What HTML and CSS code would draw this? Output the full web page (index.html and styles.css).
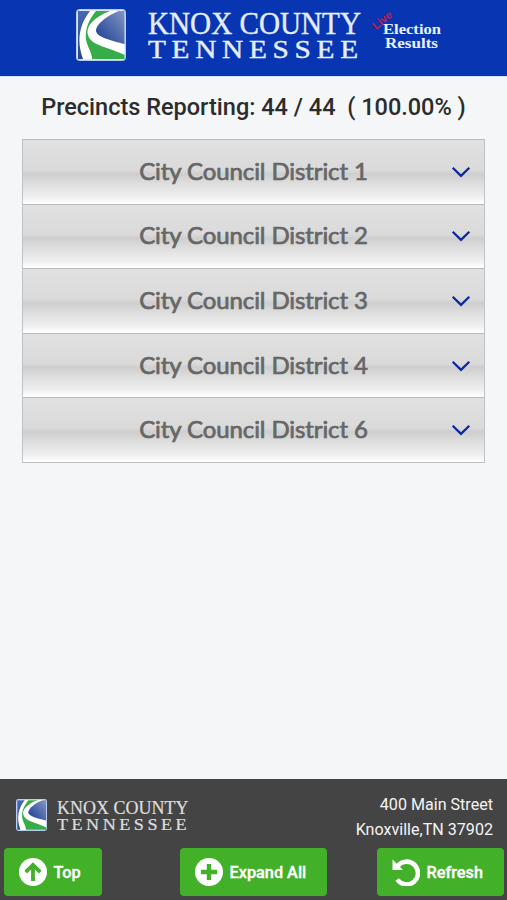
FILE: index.html
```html
<!DOCTYPE html>
<html lang="en">
<head>
<meta charset="utf-8">
<title>Knox County Election Results</title>
<link rel="stylesheet" href="styles.css">
</head>
<body>
<svg class="defs" width="0" height="0" aria-hidden="true">
  <defs>
    <linearGradient id="hill" x1="0" y1="1" x2="1" y2="0"><stop offset="0" stop-color="#183b94"/><stop offset="1" stop-color="#8495c2"/></linearGradient>
    <linearGradient id="edge" x1="0" y1="0" x2="0" y2="1"><stop offset="0" stop-color="#4867b4"/><stop offset="1" stop-color="#27458f"/></linearGradient>
    <symbol id="mark" viewBox="0 0 50 52" preserveAspectRatio="none">
      <rect width="50" height="52" rx="4" fill="#b9cdf0"/>
      <rect x="1.5" y="1.5" width="47" height="49" rx="2.5" fill="#fff"/>
      <path d="M2 2H14C4 15 0 30 7 50H2Z" fill="url(#edge)"/>
      <path d="M20 2H38C23 8 15 16 15 24C16 34 32 35 48.5 45V50H16C16 41 8 35 10 23C11 15 15 8 20 2Z" fill="#36ad49"/>
      <path d="M34 2H44C28 9 20 17 21 24C23 32 39 34 48.500 36V46C33 38 15 37 12 26C9 16 21 7 34 2Z" fill="#fff"/>
      <path d="M43 2H48.500V35C36 32 20 28 20 21.500C20 15 32 6 43 2Z" fill="url(#hill)"/>
    </symbol>
    <symbol id="words" viewBox="0 0 214 50">
      <text x="0" y="22.500" font-size="31.500" textLength="213" lengthAdjust="spacingAndGlyphs">KNOX COUNTY</text>
      <text transform="scale(1.13 1)" x="0" y="47" font-size="26" textLength="186">TENNESSEE</text>
    </symbol>
    <symbol id="chevron" viewBox="0 0 20 12"><path d="M1.700 1.700L10 9.800L18.300 1.700" fill="none" stroke="#0b2a9b" stroke-width="2.300"/></symbol>
  </defs>
</svg>
<header class="header">
  <svg class="mark"><use href="#mark"/></svg>
  <svg class="words"><use href="#words"/></svg>
  <svg class="election" viewBox="0 0 72 54">
    <text class="live" transform="translate(4 21) rotate(-39)">Live</text>
    <text x="11" y="24.500" textLength="58" lengthAdjust="spacingAndGlyphs">Election</text>
    <text x="13" y="39" textLength="53" lengthAdjust="spacingAndGlyphs">Results</text>
  </svg>
</header>
<main class="main">
  <h1 class="status">Precincts Reporting: 44 / 44&nbsp; ( 100.00% )</h1>
  <div class="contests">
    <div class="contest"><span>City Council District 1</span><svg class="chevron"><use href="#chevron"/></svg></div>
    <div class="contest"><span>City Council District 2</span><svg class="chevron"><use href="#chevron"/></svg></div>
    <div class="contest"><span>City Council District 3</span><svg class="chevron"><use href="#chevron"/></svg></div>
    <div class="contest"><span>City Council District 4</span><svg class="chevron"><use href="#chevron"/></svg></div>
    <div class="contest"><span>City Council District 6</span><svg class="chevron"><use href="#chevron"/></svg></div>
  </div>
</main>
<footer class="footer">
  <div class="info">
    <div class="brand"><svg class="mark"><use href="#mark"/></svg><svg class="words"><use href="#words"/></svg></div>
    <address class="address">400 Main Street<br>Knoxville,TN 37902</address>
  </div>
  <nav class="actions">
    <button class="button top"><svg class="icon" viewBox="0 0 28 28"><circle cx="14" cy="14" r="14" fill="#fff"/><path d="M14 23V8M6.700 14.200L14 6.900L21.300 14.200" fill="none" stroke="#43b02a" stroke-width="3.800"/></svg><span>Top</span></button>
    <button class="button expand"><svg class="icon" viewBox="0 0 28 28"><circle cx="14" cy="14" r="14" fill="#fff"/><path d="M14 6V22M6 14H22" stroke="#43b02a" stroke-width="4.400"/></svg><span>Expand All</span></button>
    <button class="button refresh"><svg class="icon" viewBox="0 0 28 28"><path d="M5.500 8.200A11.400 11.400 0 1 1 5.200 21.500" fill="none" stroke="#fff" stroke-width="4.600"/><path d="M.5 1.500V12H11Z" fill="#fff"/></svg><span>Refresh</span></button>
  </nav>
</footer>
</body>
</html>
```

FILE: styles.css
```css
* { box-sizing: border-box; }
body {
  margin: 0;
  height: 900px;
  display: flex;
  flex-direction: column;
  overflow: hidden;
  background: #f4f6f8;
  font-family: Roboto, "Liberation Sans", sans-serif;
}
.defs { position: absolute; }
svg { display: block; flex: none; }
.header {
  height: 77px;
  padding: 9px 0 0 76px;
  display: flex;
  align-items: flex-start;
  background: #0836b3;
  border-bottom: 1px solid #d5def3;
}
.header .mark { width: 50px; height: 52px; }
.words {
  font-family: "Liberation Serif", serif;
  fill: #e4eeff;
  stroke: #e4eeff;
  stroke-width: 0.4px;
}
.header .words { width: 214px; height: 50px; margin: 2px 0 0 22px; }
.election {
  width: 72px;
  height: 54px;
  margin-left: 10px;
  overflow: visible;
  font: bold 15.5px "Liberation Serif", serif;
  fill: #e9f1ff;
}
.live { font: bold 11px "Liberation Sans", sans-serif; fill: #c41b4a; }
.main { flex: 1; padding: 0 22px; }
.status {
  margin: 0;
  height: 62px;
  line-height: 61px;
  text-align: center;
  white-space: nowrap;
  font-size: 23.5px;
  font-weight: 500;
  color: #2c2c2c;
}
.contests {
  height: 324px;
  display: grid;
  grid-template-rows: repeat(5, 1fr);
  border: 1px solid #bfc2c4;
  border-top: 0;
}
.contest {
  display: grid;
  grid-template-columns: 1fr 20px;
  align-items: center;
  padding: 0 13px 0 0;
  border-top: 1.5px solid #b9bbbc;
  background: linear-gradient(#e1e1e1 0%, #dadada 47%, #cecece 53%, #dedede 68%, #eee 88%, #fafafa 96%, #fff 100%);
  font: 400 24px Lato, sans-serif;
  letter-spacing: -0.1px;
  -webkit-text-stroke: 0.7px #666;
  color: #666;
  text-align: center;
}
.contest span {
  white-space: nowrap;
  padding: 0 0 3px 33px;
}
.chevron { width: 20px; height: 12px; }
.footer {
  height: 121px;
  background: #444;
  color: #f4f4f4;
}
.info {
  height: 69px;
  display: flex;
  justify-content: space-between;
  padding: 14px 14px 0 16px;
}
.brand { display: flex; padding-top: 6px; }
.brand .mark { width: 31px; height: 32px; }
.brand .words {
  width: 132px;
  height: 32px;
  margin: 1px 0 0 10px;
  fill: #ddd;
  stroke: #ddd;
}
.address {
  font-size: 16.1px;
  font-style: normal;
  line-height: 24.5px;
  text-align: right;
}
.actions {
  display: grid;
  grid-template-columns: 98px 147px 127px;
  column-gap: 78px;
  padding-left: 4px;
}
.button {
  height: 48px;
  display: flex;
  align-items: center;
  gap: 6.5px;
  padding: 0 0 0 15px;
  border: 0;
  border-radius: 4px;
  background: #43b02a;
  color: #fff;
  font: 500 16.3px Roboto, sans-serif;
  -webkit-text-stroke: 0.35px #fff;
  white-space: nowrap;
}
.icon { width: 28px; height: 28px; }
.refresh { margin-left: -28px; width: 127px; }
```
